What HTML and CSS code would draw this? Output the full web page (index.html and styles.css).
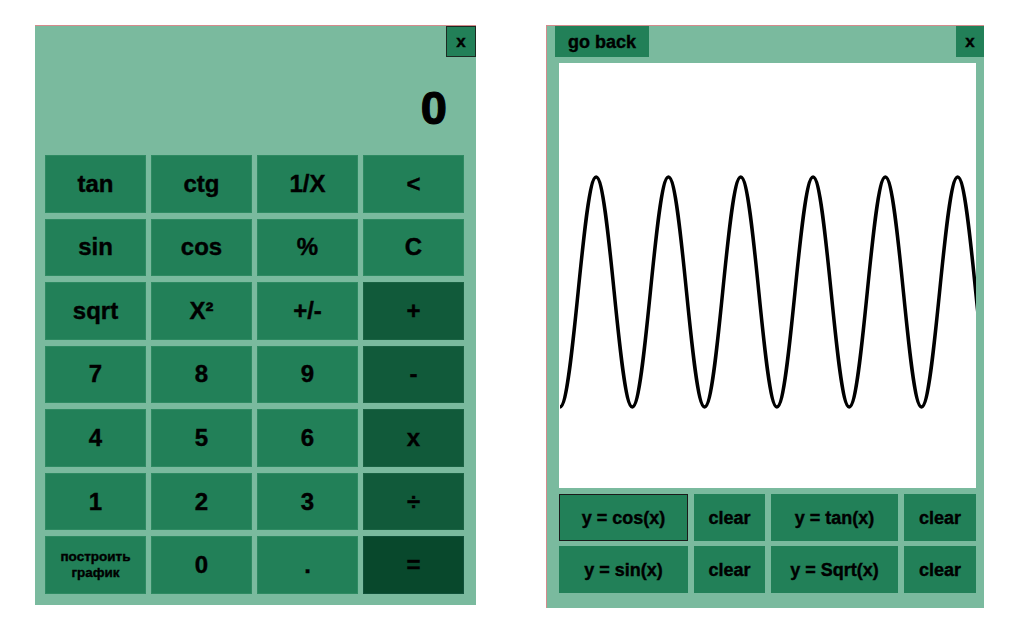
FILE: index.html
```html
<!DOCTYPE html>
<html lang="ru">
<head>
<meta charset="utf-8">
<title>Calculator</title>
<link rel="stylesheet" href="styles.css">
</head>
<body>
<div class="desk">
  <section class="calc">
    <div class="calc-head">
      <button class="close close-bordered">x</button>
    </div>
    <div class="display">0</div>
    <div class="keys">
      <button class="key">tan</button>
      <button class="key">ctg</button>
      <button class="key">1/X</button>
      <button class="key">&lt;</button>
      <button class="key">sin</button>
      <button class="key">cos</button>
      <button class="key">%</button>
      <button class="key">C</button>
      <button class="key">sqrt</button>
      <button class="key">X²</button>
      <button class="key">+/-</button>
      <button class="key op">+</button>
      <button class="key">7</button>
      <button class="key">8</button>
      <button class="key">9</button>
      <button class="key op">-</button>
      <button class="key">4</button>
      <button class="key">5</button>
      <button class="key">6</button>
      <button class="key op">x</button>
      <button class="key">1</button>
      <button class="key">2</button>
      <button class="key">3</button>
      <button class="key op">÷</button>
      <button class="key small">построить<br>график</button>
      <button class="key">0</button>
      <button class="key">.</button>
      <button class="key eq">=</button>
    </div>
  </section>

  <section class="plot">
    <div class="plot-head">
      <button class="back">go back</button>
      <button class="close">x</button>
    </div>
    <div class="canvas">
      <svg class="graph" width="417" height="425" viewBox="0 0 417 425">
        <path d="M1 344 C14.17 344 24.13 114 37.15 114 s22.98 230 36.15 230 s22.98 -230 36.15 -230 s22.98 230 36.15 230 s22.98 -230 36.15 -230 s22.98 230 36.15 230 s22.98 -230 36.15 -230 s22.98 230 36.15 230 s22.98 -230 36.15 -230 s22.98 230 36.15 230 s22.98 -230 36.15 -230 s22.98 230 36.15 230" fill="none" stroke="#000" stroke-width="3.5"/>
      </svg>
    </div>
    <div class="funcs">
      <button class="fbtn focused">y = cos(x)</button>
      <button class="fbtn">clear</button>
      <button class="fbtn">y = tan(x)</button>
      <button class="fbtn">clear</button>
      <button class="fbtn">y = sin(x)</button>
      <button class="fbtn">clear</button>
      <button class="fbtn">y = Sqrt(x)</button>
      <button class="fbtn">clear</button>
    </div>
  </section>
</div>
</body>
</html>
```

FILE: styles.css
```css
* {
  box-sizing: border-box;
}

html, body {
  margin: 0;
  padding: 0;
  background: #ffffff;
}

body {
  font-family: "Liberation Sans", Arial, sans-serif;
  font-weight: bold;
  color: #000;
}

button {
  font-family: "Liberation Sans", Arial, sans-serif;
  font-weight: bold;
  color: #000;
  border: none;
  padding: 0;
  margin: 0;
  cursor: pointer;
  -webkit-text-stroke: 0.4px #000;
}

.desk {
  display: flex;
  align-items: flex-start;
  gap: 70px;
  padding: 25px 0 0 35px;
}

/* ---------- calculator ---------- */
.calc {
  width: 441px;
  height: 580px;
  background: #7aba9e;
  border-top: 1px solid #d48a8c;
  display: flex;
  flex-direction: column;
  padding: 0 12px 11px 10px;
}

.calc-head {
  height: 31px;
  display: flex;
  justify-content: flex-end;
  margin-right: -12px;
}

.close {
  width: 28px;
  height: 31px;
  background: #228058;
  font-size: 17px;
  line-height: 1;
}

.close-bordered {
  width: 30px;
  border: 1px solid #1c2a22;
}

.display {
  height: 98px;
  display: flex;
  align-items: center;
  justify-content: flex-end;
  padding: 2px 17px 0 0;
  font-size: 47px;
  line-height: 1;
  -webkit-text-stroke: 1.2px #000;
}

.keys {
  height: 439px;
  display: grid;
  grid-template-columns: repeat(4, 101px);
  grid-template-rows: repeat(7, 1fr);
  column-gap: 5px;
  row-gap: 6px;
}

.key {
  background: #228058;
  border: 1px solid #2e8a62;
  font-size: 24px;
  line-height: 1;
}

.key.op {
  background: #115a3a;
  border-color: #1a6343;
}

.key.eq {
  background: #08482c;
  border-color: #10523a;
}

.key.small {
  font-size: 13.5px;
  line-height: 16px;
}

/* ---------- plot window ---------- */
.plot {
  width: 438px;
  height: 583px;
  background: #7aba9e;
  border-top: 1px solid #d48a8c;
  border-left: 1px solid #d48a8c;
  display: flex;
  flex-direction: column;
  padding: 0 8px 15px 12px;
}

.plot-head {
  height: 31px;
  display: flex;
  justify-content: space-between;
  margin: 0 -8px 6px -4px;
}

.back {
  width: 94px;
  height: 31px;
  background: #228058;
  font-size: 18px;
  line-height: 1;
}

.canvas {
  width: 417px;
  height: 425px;
  background: #ffffff;
  overflow: hidden;
}

.graph {
  display: block;
}

.funcs {
  margin-top: 6px;
  display: grid;
  grid-template-columns: 129px 71px 127px 72px;
  grid-template-rows: 47px 47px;
  column-gap: 6px;
  row-gap: 5px;
}

.fbtn {
  background: #228058;
  font-size: 18px;
  line-height: 1;
}

.fbtn.focused {
  border: 1px solid #1a1a1a;
}
```
